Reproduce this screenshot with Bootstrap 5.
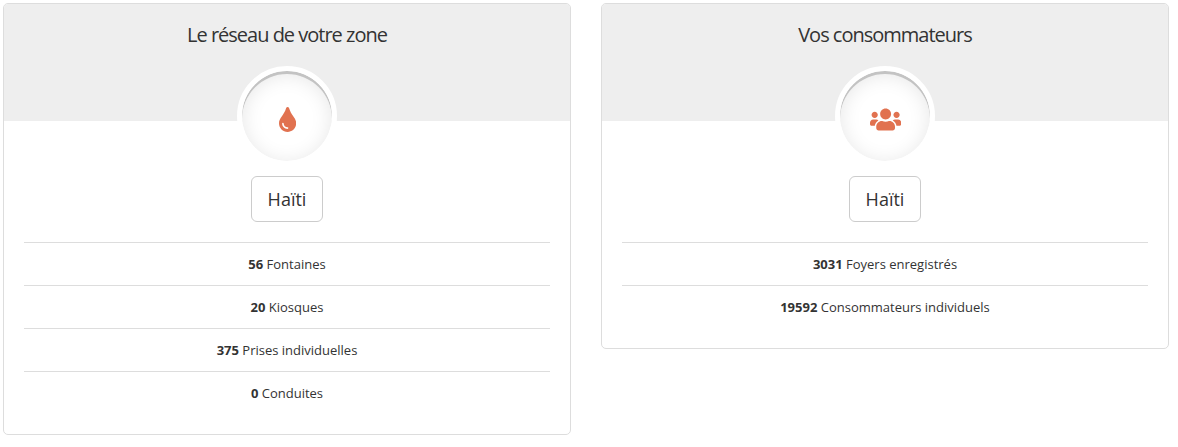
<!DOCTYPE html>
<html lang="fr"><head><meta charset="utf-8"><title>Réseau</title>
<link href="https://cdn.jsdelivr.net/npm/bootstrap@5.3.0/dist/css/bootstrap.min.css" rel="stylesheet">
<style>
body{font-family:"Open Sans",sans-serif;font-size:13px;line-height:20px;color:#333;background:#fff}
.zones{padding:3px 9px 0 3px;gap:30px}
.panel{border:1px solid #ddd;border-radius:5px;width:568px;padding-bottom:20px}
.panel-top{background:#eee;height:117px;padding-top:18px;border-radius:4px 4px 0 0}
.panel-top h2{font-size:20px;line-height:26px;letter-spacing:-1px;margin:0;color:#333}
.medal{width:100px;height:100px;border:5px solid #fff;border-radius:50%;margin-top:-55px;padding:7px 0 0 1px;background:#fff;box-shadow:inset 0 3px 0 #c3c3c3,inset 0 3px 20px #e6e6e6}
.medal svg{height:25px;fill:#e17250}
.zone-btn{width:72px;height:46px;border:1px solid #ccc;border-radius:6px;font-size:18px;margin:10px 0 20px;color:#333;background:#fff}
.stats{margin:0 20px}
.stats li{border-top:1px solid #ddd;height:43px;padding-top:11px}
</style></head><body>
<main class="d-flex align-items-start zones">
<section class="panel text-center"><div class="panel-top"><h2>Le réseau de votre zone</h2></div>
<div class="d-flex flex-column align-items-center"><div class="medal d-flex align-items-center justify-content-center position-relative"><svg viewBox="0 0 352 512" aria-hidden="true"><path d="M205.22 22.09c-7.94-28.78-49.44-30.12-58.44 0C100.01 179.85 0 222.72 0 333.91 0 432.35 78.72 512 176 512s176-79.65 176-178.09c0-111.75-99.79-153.34-146.78-311.82zM176 448c-61.75 0-112-50.25-112-112 0-8.84 7.16-16 16-16s16 7.16 16 16c0 44.11 35.89 80 80 80 8.84 0 16 7.16 16 16s-7.16 16-16 16z"/></svg></div>
<button class="zone-btn">Haïti</button></div>
<ul class="stats list-unstyled"><li><b>56</b> Fontaines</li><li><b>20</b> Kiosques</li><li><b>375</b> Prises individuelles</li><li><b>0</b> Conduites</li></ul></section>
<section class="panel text-center"><div class="panel-top"><h2>Vos consommateurs</h2></div>
<div class="d-flex flex-column align-items-center"><div class="medal d-flex align-items-center justify-content-center position-relative"><svg viewBox="0 0 640 512" aria-hidden="true"><path d="M96 224c35.3 0 64-28.7 64-64s-28.7-64-64-64-64 28.7-64 64 28.7 64 64 64zm448 0c35.3 0 64-28.7 64-64s-28.7-64-64-64-64 28.7-64 64 28.7 64 64 64zm32 32h-64c-17.6 0-33.5 7.1-45.1 18.6 40.3 22.1 68.9 62 75.1 109.4h66c17.7 0 32-14.3 32-32v-32c0-35.3-28.7-64-64-64zm-256 0c61.9 0 112-50.1 112-112S381.9 32 320 32 208 82.1 208 144s50.1 112 112 112zm76.8 32h-8.3c-20.8 10-43.9 16-68.5 16s-47.6-6-68.5-16h-8.3C179.6 288 128 339.6 128 403.2V432c0 26.5 21.5 48 48 48h288c26.5 0 48-21.5 48-48v-28.8c0-63.6-51.6-115.2-115.2-115.2zm-223.7-13.4C161.5 263.1 145.6 256 128 256H64c-35.3 0-64 28.7-64 64v32c0 17.7 14.3 32 32 32h65.9c6.3-47.4 34.9-87.3 75.2-109.4z"/></svg></div>
<button class="zone-btn">Haïti</button></div>
<ul class="stats list-unstyled"><li><b>3031</b> Foyers enregistrés</li><li><b>19592</b> Consommateurs individuels</li></ul></section>
</main>
<script src="https://cdn.jsdelivr.net/npm/bootstrap@5.3.0/dist/js/bootstrap.bundle.min.js"></script>
</body></html>
